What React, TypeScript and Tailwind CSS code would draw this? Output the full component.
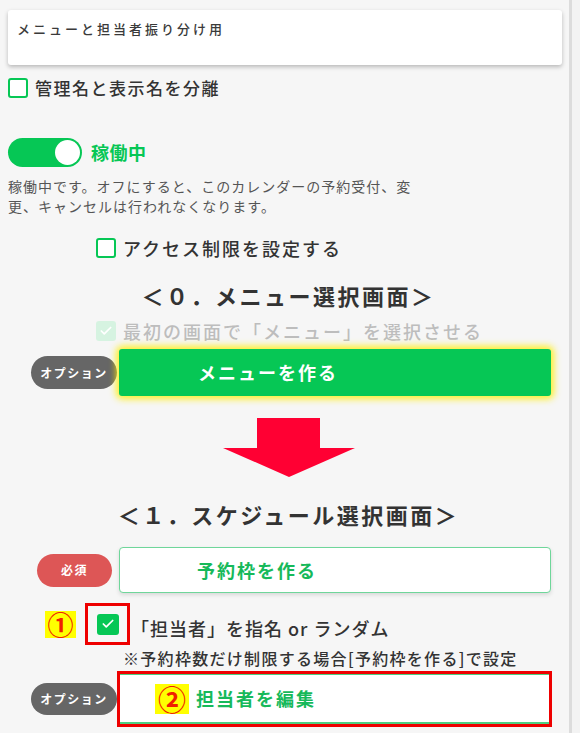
import React from 'react';
import { Check } from 'lucide-react';

function Pill({ label, tone, className }: { label: string; tone: 'gray' | 'red'; className?: string }) {
  return (
    <div
      className={`flex items-center justify-center rounded-full text-white text-[12px] font-bold tracking-[1.5px] ${
        tone === 'gray' ? 'bg-[#666666]' : 'bg-[#dd5656]'
      } ${className ?? ''}`}
    >
      {label}
    </div>
  );
}

export default function App() {
  return (
    <div className="w-[580px] min-h-[733px] bg-[#f3f3f3] font-['Noto_Sans_CJK_JP','Noto_Sans',sans-serif] text-[#333]">
      <div className="w-[572px] min-h-[733px] bg-[#f6f6f6] border-r-[3px] border-[#dcdcdc] pl-2 pt-[10px] pb-2">
        {/* title card */}
        <div className="w-[554px] h-[55px] bg-white rounded-[3px] shadow-[0_2px_4px_rgba(0,0,0,0.25)] pl-[9px] pt-[12px]">
          <p className="text-[13px] leading-[13px] tracking-[3px] font-medium text-[#3a3a3a]">メニューと担当者振り分け用</p>
        </div>

        <div className="mt-[13px] flex items-center">
          <span className="w-5 h-5 border-2 border-[#06c755] rounded-[3px] bg-white" />
          <span className="ml-[7px] text-[17px] leading-5 tracking-[1.5px] font-medium">管理名と表示名を分離</span>
        </div>

        {/* status toggle */}
        <div className="mt-[40px] flex items-center">
          <div className="w-[74px] h-[29px] rounded-full bg-[#06c755] flex items-center justify-end p-[2px]">
            <span className="w-[25px] h-[25px] rounded-full bg-white" />
          </div>
          <span className="ml-[9px] text-[18px] font-bold text-[#06c755] tracking-[0.5px]">稼働中</span>
        </div>
        <p className="mt-[9px] text-[14px] leading-[20px] tracking-[1px] text-[#555]">
          稼働中です。オフにすると、このカレンダーの予約受付、変
          <br />
          更、キャンセルは行われなくなります。
        </p>

        <div className="mt-[22px] ml-[88px] flex items-center">
          <span className="w-5 h-5 border-2 border-[#06c755] rounded-[3px] bg-white" />
          <span className="ml-[7px] text-[18px] leading-5 tracking-[2px] font-medium">アクセス制限を設定する</span>
        </div>

        <h2 className="mt-[23px] text-center text-[22px] leading-[28px] tracking-[2.5px] font-semibold text-[#333]">
          ＜０．メニュー選択画面＞
        </h2>

        <div className="mt-[12px] ml-[88px] flex items-center">
          <span className="w-5 h-5 rounded-[3px] bg-[#d6f3e1] flex items-center justify-center">
            <Check className="w-[14px] h-[14px] text-white" strokeWidth={3} />
          </span>
          <span className="ml-[7px] text-[18px] leading-5 tracking-[2px] font-medium text-[#bdbdbd]">最初の画面で「メニュー」を選択させる</span>
        </div>

        <div className="mt-[8px] flex items-center">
          <Pill label="オプション" tone="gray" className="ml-[23px] w-[86px] h-[33px]" />
          <button className="ml-[2px] w-[432px] h-[47px] rounded-[3px] bg-[#06c755] shadow-[0_0_7px_3px_rgba(255,238,0,0.85)] flex items-center pl-[79px] text-white text-[18px] font-bold tracking-[2px]">
            メニューを作る
          </button>
        </div>

        <div className="mt-[22px] flex justify-center">
          <svg width="132" height="59" viewBox="0 0 132 59">
            <polygon points="34,0 97,0 97,30 132,30 66,59 0,30 34,30" fill="#ff0033" />
          </svg>
        </div>

        <h2 className="mt-[23px] text-center text-[22px] leading-[28px] tracking-[2.5px] font-semibold text-[#333]">
          ＜１．スケジュール選択画面＞
        </h2>

        <div className="mt-[19px] flex items-center">
          <Pill label="必須" tone="red" className="ml-[29px] w-[75px] h-[33px]" />
          <button className="ml-[7px] w-[432px] h-[46px] rounded-[4px] bg-white border-[1.5px] border-[#6fd69a] shadow-[0_2px_4px_rgba(0,0,0,0.12)] flex items-center pl-[77px] text-[#16b95a] text-[18px] font-bold tracking-[2px]">
            予約枠を作る
          </button>
        </div>

        <div className="mt-[10px] flex items-center">
          <span className="ml-[37px] w-[31px] h-[27px] bg-[#ffff00] flex items-center justify-center text-[26px] leading-none font-bold text-[#f02000]">
            ①
          </span>
          <div className="ml-[9px] w-[45px] h-[42px] border-[3px] border-[#ee0000] flex items-center justify-center">
            <span className="w-[22px] h-[21px] rounded-[3px] bg-[#06c755] flex items-center justify-center">
              <Check className="w-[14px] h-[14px] text-white" strokeWidth={3} />
            </span>
          </div>
          <span className="ml-[1px] pt-[7px] text-[18px] leading-5 tracking-[1px] font-medium">「担当者」を指名 or ランダム</span>
        </div>
        <p className="mt-[3px] ml-[115px] text-[16px] leading-[20px] tracking-[1.3px] font-medium">
          ※予約枠数だけ制限する場合[予約枠を作る]で設定
        </p>

        <div className="mt-[3px] flex items-center">
          <Pill label="オプション" tone="gray" className="ml-[23px] w-[86px] h-[32px]" />
          <div className="w-[435px] h-[56px] border-[3px] border-[#ee0000]">
            <button className="w-full h-full bg-white border-t border-b-2 border-[#4fcf82] flex items-center pl-[35px]">
              <span className="w-[34px] h-[30px] bg-[#ffff00] flex items-center justify-center text-[28px] leading-none font-bold text-[#f02000]">
                ②
              </span>
              <span className="ml-[7px] text-[#16b95a] text-[18px] font-bold tracking-[2px]">担当者を編集</span>
            </button>
          </div>
        </div>
      </div>
    </div>
  );
}
